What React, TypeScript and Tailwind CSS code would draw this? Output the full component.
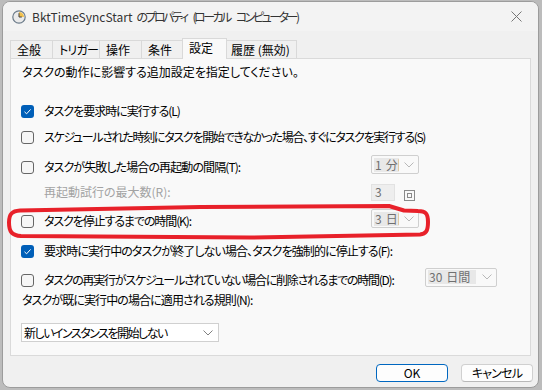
import React from "react";

const FONT = { fontFamily: '"Noto Sans CJK JP", "Noto Sans", sans-serif', fontFeatureSettings: '"palt"' } as React.CSSProperties;

function Check({ checked }: { checked?: boolean }) {
  if (checked) {
    return (
      <div className="w-[13px] h-[13px] rounded-[3px] bg-[#005fb8] flex items-center justify-center shrink-0">
        <svg width="9" height="9" viewBox="0 0 9 9">
          <path d="M1.5 4.8 L3.6 6.8 L7.6 2.4" fill="none" stroke="#ffffff" strokeWidth="1" />
        </svg>
      </div>
    );
  }
  return <div className="w-[13px] h-[13px] rounded-[3px] border border-[#666666] bg-[#f6f6f6] shrink-0" />;
}

function Chevron({ color = "#b8b8b8" }: { color?: string }) {
  return (
    <svg width="10" height="6" viewBox="0 0 10 6" className="shrink-0">
      <path d="M0.5 0.5 L5 5 L9.5 0.5" fill="none" stroke={color} strokeWidth="1" />
    </svg>
  );
}

function Combo({ text, w, tw, extra }: { text: string; w: string; tw: string; extra?: string }) {
  return (
    <div className={`${w} ${extra ?? ""} h-[19px] border border-[#cfcfcf] rounded-[2px] bg-[#f9f9f9] flex items-center pl-[2px] pr-[4px] shrink-0`}>
      <div className={`${tw} h-[14px] bg-[#e8e8e8] overflow-hidden whitespace-nowrap text-[12px] leading-[14px] text-[#707070] pl-[1px]`}>{text}</div>
      <div className="flex-1" />
      <Chevron />
    </div>
  );
}

function Row({ h, mt, children }: { h: string; mt: string; children: React.ReactNode }) {
  return <div className={`flex items-center ${h} ${mt} pl-[10px]`}>{children}</div>;
}

export default function App() {
  return (
    <div className="relative w-[542px] h-[390px] bg-[#bcbcbc] overflow-hidden text-[12px] text-black" style={FONT}>
      <div className="ml-[2px] mt-[1px] w-[537px] h-[387px] border border-[#9c9c9c] rounded-[8px] overflow-hidden flex flex-col bg-[#f0f0f0]">
        {/* Title bar */}
        <div className="h-[29px] bg-[#f3f3f3] flex items-center pl-[9px] pr-[16px] shrink-0">
          <svg width="14" height="14" viewBox="0 0 14 14" className="shrink-0">
            <circle cx="7" cy="7" r="6.2" fill="#eaeaea" stroke="#6b7b8a" strokeWidth="1.2" />
            <path d="M7 7 L7 2 A5 5 0 0 1 12 7 Z" fill="#f2c14e" />
            <path d="M7 3.2 L7 7 L9.8 7" fill="none" stroke="#404040" strokeWidth="1" />
          </svg>
          <div className="ml-[6px] text-[12px] text-[#333333] whitespace-nowrap flex items-center">
            <span>BktTimeSyncStart</span>
            <span className="inline-block w-[4px]" />
            <span className="tracking-[-2.5px]">のプロパティ</span>
            <span className="inline-block w-[6px]" />
            <span className="tracking-[-2.5px]">(ローカル</span>
            <span className="inline-block w-[6px]" />
            <span className="tracking-[-2.5px]">コンピューター)</span>
          </div>
          <div className="flex-1" />
          <svg width="11" height="11" viewBox="0 0 11 11">
            <path d="M0.5 0.5 L10.5 10.5 M10.5 0.5 L0.5 10.5" stroke="#777777" strokeWidth="1" />
          </svg>
        </div>

        {/* Body */}
        <div className="flex-1 flex flex-col pt-[7px]">
          {/* Tabs */}
          <div className="flex items-end h-[20px] pl-[7px] whitespace-nowrap">
            <div className="w-[42px] h-[18px] border-t border-l border-[#d9d9d9] pl-[6px] flex items-center">全般</div>
            <div className="w-[47px] h-[18px] border-t border-l border-[#d9d9d9] pl-[6px] flex items-center tracking-[-0.8px]">トリガー</div>
            <div className="w-[42px] h-[18px] border-t border-l border-[#d9d9d9] pl-[6px] flex items-center">操作</div>
            <div className="w-[41px] h-[18px] border-t border-l border-[#d9d9d9] pl-[6px] flex items-center">条件</div>
            <div className="relative z-10 w-[45px] h-[21px] -mb-[1px] border-t border-l border-r border-[#d9d9d9] bg-[#f9f9f9] pl-[6px] pb-[3px] flex items-center">設定</div>
            <div className="w-[70px] h-[18px] border-t border-r border-[#d9d9d9] pl-[4px] flex items-center">履歴 (無効)</div>
          </div>

          {/* Panel */}
          <div className="ml-[7px] w-[521px] h-[298px] border border-[#dadada] bg-[#f9f9f9] flex flex-col whitespace-nowrap">
            <div className="h-[16px] mt-[5px] pl-[11px] flex items-center">タスクの動作に影響する追加設定を指定してください。</div>

            <Row h="h-[16px]" mt="mt-[23px]">
              <Check checked />
              <span className="ml-[10px] tracking-[-1px]">タスクを要求時に実行する(L)</span>
            </Row>

            <Row h="h-[16px]" mt="mt-[10px]">
              <Check />
              <span className="ml-[10px] tracking-[-1.3px]">スケジュールされた時刻にタスクを開始できなかった場合、すぐにタスクを実行する(S)</span>
            </Row>

            <Row h="h-[22px]" mt="mt-[11px]">
              <div className="w-[350px] flex items-center shrink-0">
                <Check />
                <span className="ml-[10px] tracking-[-0.9px]">タスクが失敗した場合の再起動の間隔(T):</span>
              </div>
              <Combo text={"1\u2004分間"} w="w-[48px]" tw="w-[25px]" extra="mb-[5px]" />
            </Row>

            <Row h="h-[20px]" mt="mt-[4px]">
              <div className="w-[350px] pl-[23px] text-[#a3a3a3] shrink-0">再起動試行の最大数(R):</div>
              <div className="w-[24px] h-[17px] border border-[#e2e2e2] bg-[#eeeeee] pl-[3px] text-[#707070] leading-[14px] text-[12px]">3</div>
              <div className="ml-[9px] mt-[6px] w-[11px] h-[11px] border border-[#8a8a8a] flex items-center justify-center">
                <div className="w-[5px] h-[5px] border border-[#8a8a8a]" />
              </div>
            </Row>

            <Row h="h-[22px]" mt="mt-[8px]">
              <div className="w-[350px] flex items-center shrink-0">
                <Check />
                <span className="ml-[10px] tracking-[-1.1px]">タスクを停止するまでの時間(K):</span>
              </div>
              <Combo text={"3\u2004日間"} w="w-[48px]" tw="w-[25px]" extra="mb-[5px]" />
            </Row>

            <Row h="h-[16px]" mt="mt-[11px]">
              <Check checked />
              <span className="ml-[10px] tracking-[-0.9px]">要求時に実行中のタスクが終了しない場合、タスクを強制的に停止する(F):</span>
            </Row>

            <Row h="h-[22px]" mt="mt-[10px]">
              <div className="w-[404px] flex items-center shrink-0 overflow-hidden">
                <Check />
                <span className="ml-[10px] tracking-[-1.25px]">タスクの再実行がスケジュールされていない場合に削除されるまでの時間(D):</span>
              </div>
              <Combo text={"30\u2004日間"} w="w-[72px]" tw="w-[48px]" extra="mb-[6px]" />
            </Row>

            <div className="h-[16px] mt-[1px] pl-[11px] flex items-center tracking-[-0.9px]">タスクが既に実行中の場合に適用される規則(N):</div>

            <div className="ml-[10px] mt-[15px] w-[198px] h-[19px] border border-[#d0d0d0] bg-white flex items-center pl-[2px] pr-[5px]">
              <span className="tracking-[-1.5px]">新しいインスタンスを開始しない</span>
              <div className="flex-1" />
              <Chevron color="#808080" />
            </div>
          </div>

          {/* Buttons */}
          <div className="flex justify-end mt-[8px] pr-[5px] gap-[13px]">
            <div className="w-[72px] h-[18px] rounded-[4px] border border-[#0067c0] bg-[#fdfdfd] flex items-center justify-center">OK</div>
            <div className="w-[72px] h-[18px] rounded-[4px] border border-[#d0d0d0] border-b-[#b8b8b8] bg-[#fdfdfd] flex items-center justify-center tracking-[-0.8px]">キャンセル</div>
          </div>
        </div>
      </div>

      {/* Red annotation */}
      <svg className="absolute left-0 top-0 pointer-events-none" width="542" height="390" viewBox="0 0 542 390">
        <path
          d="M20 210.5 C12 211, 9 214, 9 222.5 C9 232, 12 235.5, 21 236 L250 237.5 L420 234.5 C426 234, 428 231, 428 222 C428 214, 426 211, 418 211 L404 210.5 L389 206 L200 207 L20 210.5 Z"
          fill="none"
          stroke="#e8212a"
          strokeWidth="4"
          strokeLinejoin="round"
        />
      </svg>
    </div>
  );
}
